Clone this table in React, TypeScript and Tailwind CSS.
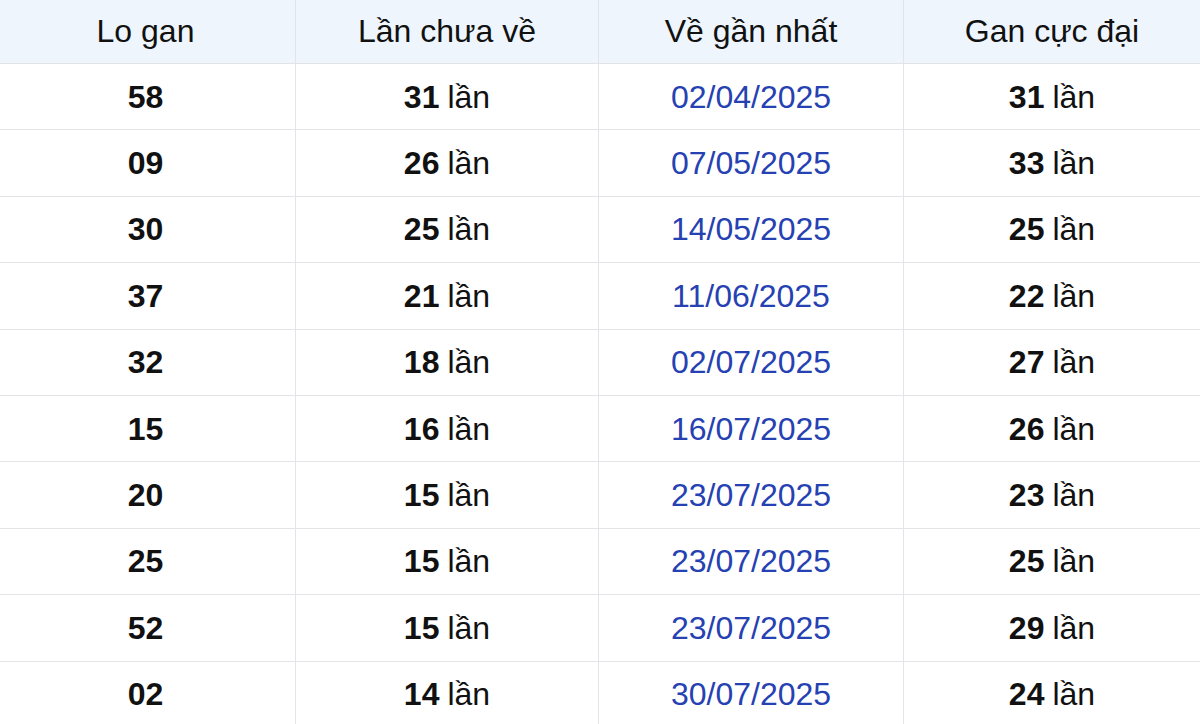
const rows = [
  { lo: "58", chua: 31, date: "02/04/2025", max: 31 },
  { lo: "09", chua: 26, date: "07/05/2025", max: 33 },
  { lo: "30", chua: 25, date: "14/05/2025", max: 25 },
  { lo: "37", chua: 21, date: "11/06/2025", max: 22 },
  { lo: "32", chua: 18, date: "02/07/2025", max: 27 },
  { lo: "15", chua: 16, date: "16/07/2025", max: 26 },
  { lo: "20", chua: 15, date: "23/07/2025", max: 23 },
  { lo: "25", chua: 15, date: "23/07/2025", max: 25 },
  { lo: "52", chua: 15, date: "23/07/2025", max: 29 },
  { lo: "02", chua: 14, date: "30/07/2025", max: 24 },
];

const headers = ["Lo gan", "Lần chưa về", "Về gần nhất", "Gan cực đại"];

const grid = "grid grid-cols-[296px_303px_305px_296px]";
const cell = "flex items-center justify-center border-r border-[#e2e4e8] last:border-r-0 first:pr-[4px]";

export default function App() {
  return (
    <div className="w-[1200px] h-[724px] overflow-hidden bg-white text-[32px] text-[#111] font-['Liberation_Sans',Arial,sans-serif]">
      <div className={`${grid} h-[64px] bg-[#eef5fd] border-b border-[#e2e4e8]`}>
        {headers.map((h) => (
          <div key={h} className={`${cell} pb-[2px]`}>
            {h}
          </div>
        ))}
      </div>
      {rows.map((r, i) => (
        <div key={i} className={`${grid} h-[66.4px] border-b border-[#e2e4e8]`}>
          <div className={`${cell} font-bold`}>{r.lo}</div>
          <div className={cell}>
            <span className="font-bold mr-[8px]">{r.chua}</span>lần
          </div>
          <div className={`${cell} text-[#2541b2]`}>{r.date}</div>
          <div className={cell}>
            <span className="font-bold mr-[8px]">{r.max}</span>lần
          </div>
        </div>
      ))}
    </div>
  );
}
